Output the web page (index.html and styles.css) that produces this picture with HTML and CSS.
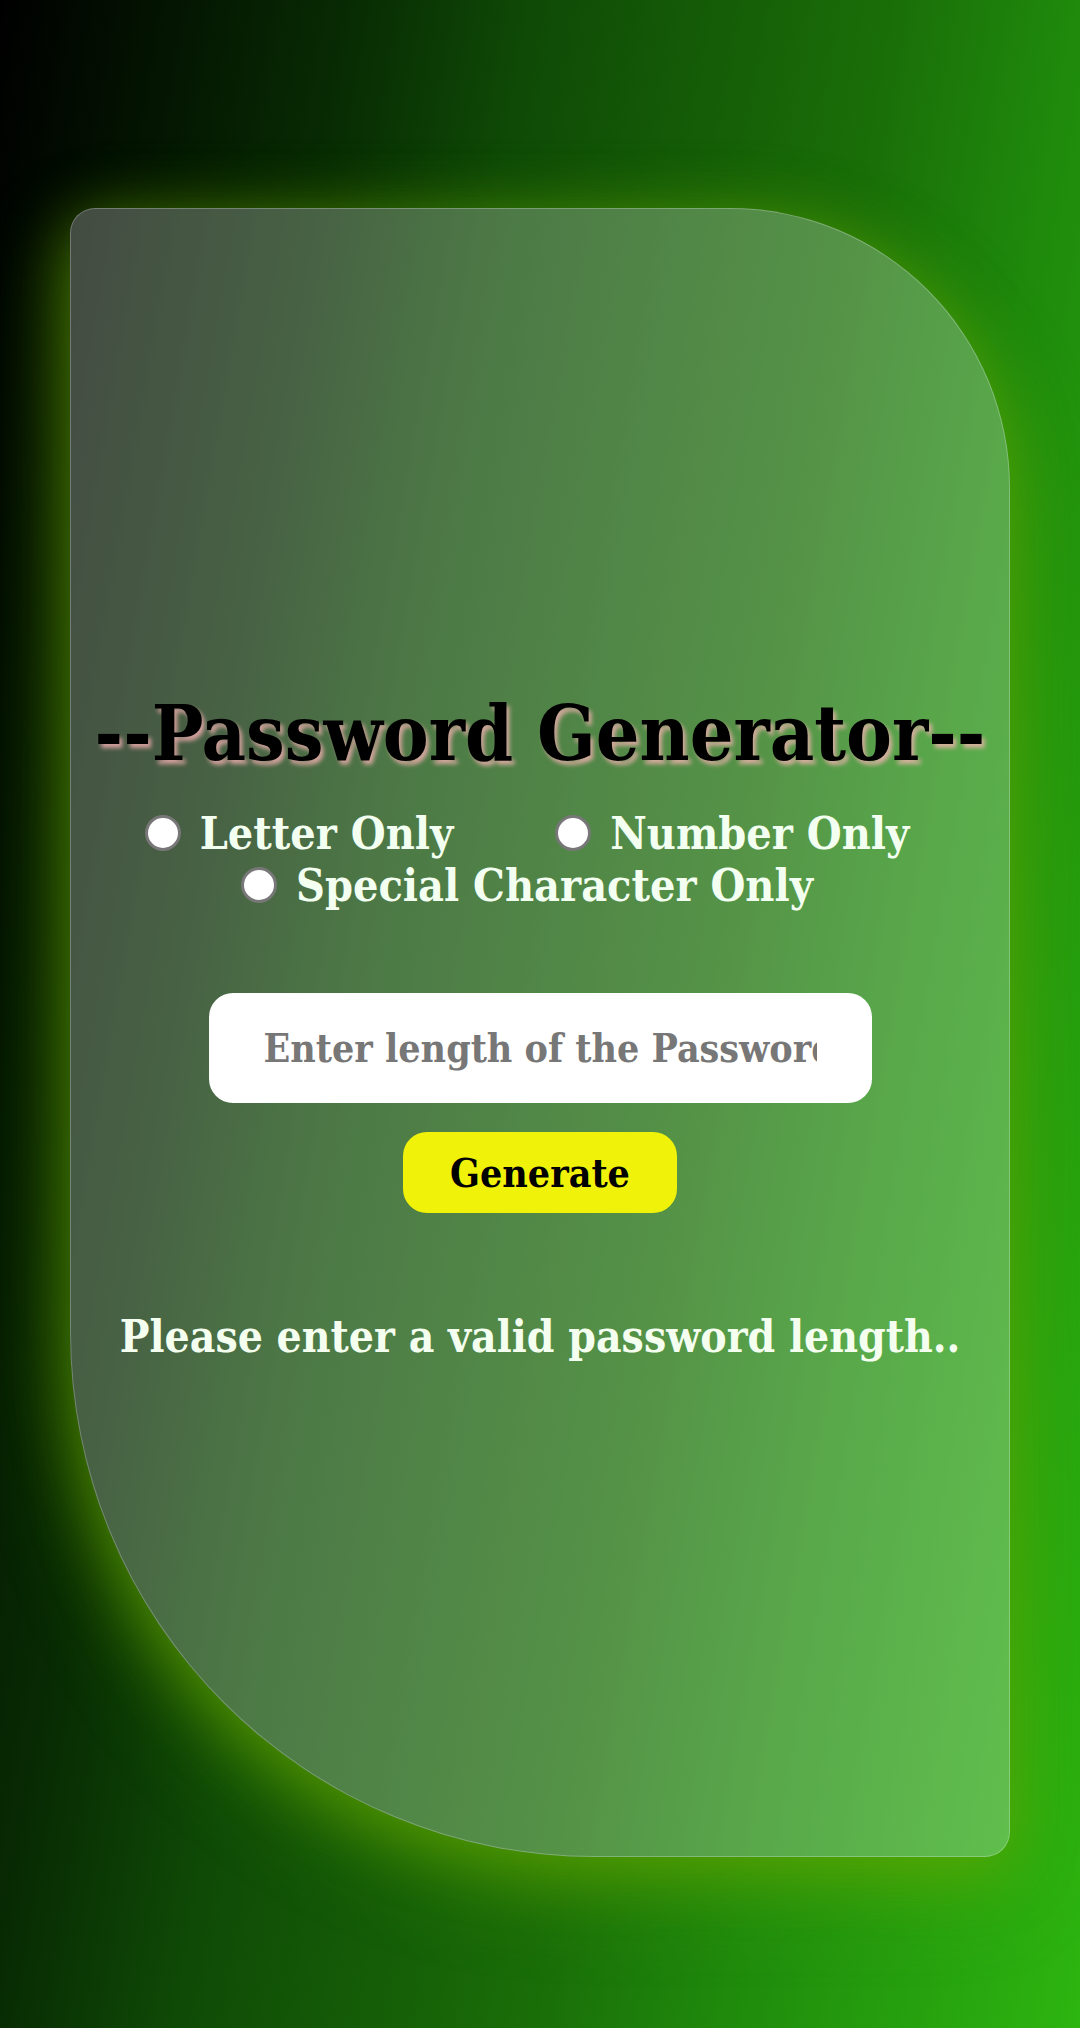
FILE: index.html
```html
<!DOCTYPE html>
<html lang="en">
<head>
<meta charset="utf-8">
<title>Password Generator</title>
<link rel="stylesheet" href="styles.css">
</head>
<body>
<main class="card">
  <h1 class="title">--Password Generator--</h1>
  <div class="options">
    <label class="option"><input type="radio" name="kind" class="radio"><span>Letter Only</span></label>
    <label class="option"><input type="radio" name="kind" class="radio"><span>Number Only</span></label>
    <label class="option"><input type="radio" name="kind" class="radio"><span>Special Character Only</span></label>
  </div>
  <input class="length" type="text" placeholder="Enter length of the Password">
  <button class="generate" type="button">Generate</button>
  <p class="message">Please enter a valid password length..</p>
</main>
</body>
</html>
```

FILE: styles.css
```css
html, body {
  margin: 0;
}

body {
  box-sizing: border-box;
  min-height: 2028px;
  padding: 208px 70px 171px;
  display: flex;
  font-family: "DejaVu Serif", serif;
  font-stretch: condensed;
  background: linear-gradient(100deg, #000 0%, #082c03 25%, #0f4a06 37%, #1a6e08 62%, #1f8a0c 75%, #2db510 100%);
}

.card {
  flex: 1;
  display: flex;
  flex-direction: column;
  align-items: center;
  padding-top: 479px;
  border: 1px solid rgba(255, 255, 255, 0.26);
  border-radius: 25px 280px 25px 525px;
  background: rgba(255, 255, 255, 0.26);
  box-shadow: 0 12px 60px rgba(110, 170, 0, 0.55), 0 30px 90px rgba(90, 170, 0, 0.45);
}

.title {
  margin: 0;
  font-size: 76.5px;
  line-height: 91px;
  font-weight: bold;
  color: #000;
  white-space: nowrap;
  text-shadow: 3px 4px 4px rgba(255, 180, 185, 0.75);
}

.options {
  margin-top: 28px;
  width: 100%;
  box-sizing: border-box;
  padding-right: 26px;
  display: flex;
  flex-wrap: wrap;
  justify-content: center;
  column-gap: 102px;
}

.option {
  display: flex;
  align-items: center;
  gap: 19px;
  height: 52px;
  font-size: 44.5px;
  font-weight: bold;
  color: #f3fff0;
  white-space: nowrap;
}

.radio {
  appearance: none;
  -webkit-appearance: none;
  margin: 0;
  width: 36px;
  height: 36px;
  box-sizing: border-box;
  border-radius: 50%;
  background: #fff;
  border: 3px solid #777;
}

.length {
  margin-top: 82px;
  width: 663px;
  height: 110px;
  box-sizing: border-box;
  border: none;
  border-radius: 24px;
  padding: 0 55px;
  background: #fff;
  font-family: "DejaVu Serif", serif;
  font-stretch: condensed;
  font-size: 39px;
  font-weight: bold;
  color: #333;
  outline: none;
}

.length::placeholder {
  color: #777;
}

.generate {
  margin-top: 29px;
  width: 274px;
  height: 81px;
  border: none;
  border-radius: 24px;
  background: #f0f20a;
  font-family: "DejaVu Serif", serif;
  font-stretch: condensed;
  font-size: 39px;
  font-weight: bold;
  color: #000;
  padding: 0;
}

.message {
  margin: 97px 0 0;
  font-size: 44px;
  line-height: 53px;
  font-weight: bold;
  color: #f4fff0;
}
```
